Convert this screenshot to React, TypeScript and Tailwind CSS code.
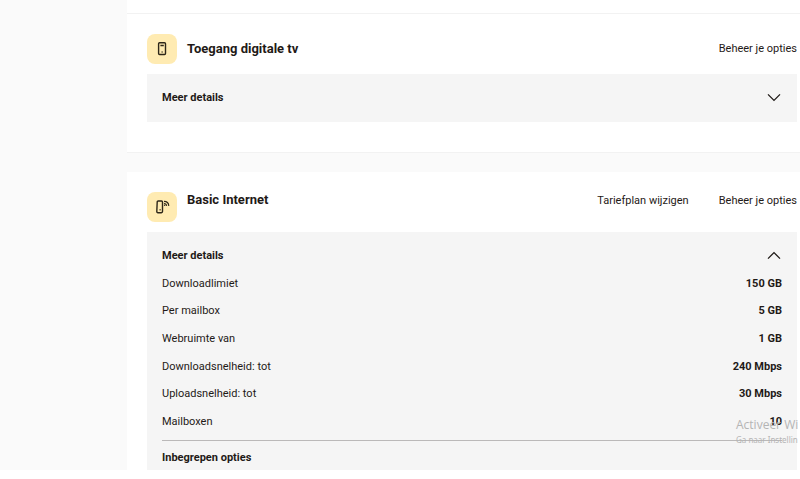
import { useState, type ReactNode } from "react";

interface Spec {
  label: string;
  value: string;
}

interface ProductCardProps {
  title: string;
  icon: ReactNode;
  links: string[];
  specs: Spec[];
  defaultOpen?: boolean;
  tall?: boolean;
}

const internetSpecs: Spec[] = [
  { label: "Downloadlimiet", value: "150 GB" },
  { label: "Per mailbox", value: "5 GB" },
  { label: "Webruimte van", value: "1 GB" },
  { label: "Downloadsnelheid: tot", value: "240 Mbps" },
  { label: "Uploadsnelheid: tot", value: "30 Mbps" },
  { label: "Mailboxen", value: "10" },
];

function DecoderIcon() {
  return (
    <svg viewBox="0 0 20 20" className="h-5 w-5" fill="none" stroke="#2d2618" strokeWidth="1.4" aria-hidden="true">
      <rect x="6.6" y="3.7" width="6.9" height="11.8" rx="1" />
      <path d="M8.4 6.5h3.4M9.6 13h1" />
    </svg>
  );
}

function ModemIcon() {
  return (
    <svg viewBox="0 0 20 20" className="h-5 w-5" fill="none" stroke="#2d2618" strokeWidth="1.4" aria-hidden="true">
      <path d="M6.2 4h3.3a1 1 0 0 1 1 1v9.6a1.1 1.1 0 0 1-1.1 1.1H5.9a1.1 1.1 0 0 1-1.1-1.2L5.2 5a1 1 0 0 1 1-1z" />
      <path d="M7.6 12.8h1" />
      <path strokeWidth="1.2" d="M12 4.4a4.9 4.9 0 0 1 4.8 4.5M12 6.5a2.6 2.6 0 0 1 2.6 2.4" />
      <circle cx="12.6" cy="8.3" r=".7" fill="#2d2618" stroke="none" />
    </svg>
  );
}

function Chevron({ open }: { open: boolean }) {
  return (
    <svg viewBox="0 0 16 16" className="h-4 w-4" fill="none" stroke="#1f1a17" strokeWidth="1.3" aria-hidden="true">
      <path d={open ? "M2 10.6l6-6 6 6" : "M2 4.4l6 6 6-6"} />
    </svg>
  );
}

function ProductCard({ title, icon, links, specs, defaultOpen = false, tall = false }: ProductCardProps) {
  const [open, setOpen] = useState(defaultOpen);

  return (
    <section className="border-b border-[#f2f2f2] bg-white pt-5 pr-[3px] pb-[30px] pl-5">
      <header className={`flex gap-[10px] pb-[10px] ${tall ? "items-start" : "items-center"}`}>
        <div className="flex h-[30px] w-[30px] shrink-0 items-center justify-center rounded-lg bg-[#ffebb2]">
          {icon}
        </div>
        <h2 className="text-[13px] leading-4 font-bold">{title}</h2>
        <nav className="ml-auto flex gap-[30px]">
          {links.map((link) => (
            <a key={link} href="#" className="leading-[18px] whitespace-nowrap">
              {link}
            </a>
          ))}
        </nav>
      </header>

      <div className="bg-[#f5f5f5] px-[15px]">
        <button
          type="button"
          aria-expanded={open}
          onClick={() => setOpen(!open)}
          className="flex h-12 w-full items-center justify-between font-bold"
        >
          Meer details
          <Chevron open={open} />
        </button>

        {open && specs.length > 0 && (
          <>
            <dl className="-mt-[11px] grid h-[172px] grid-rows-6 border-b border-[#bbb9b9] pt-px pb-1">
              {specs.map((spec) => (
                <div key={spec.label} className="flex items-center justify-between">
                  <dt>{spec.label}</dt>
                  <dd className="font-bold">{spec.value}</dd>
                </div>
              ))}
            </dl>
            <h3 className="py-2 leading-[18px] font-bold">Inbegrepen opties</h3>
          </>
        )}
      </div>
    </section>
  );
}

export default function App() {
  return (
    <div className="relative h-screen overflow-hidden bg-white pb-[9px] font-['Roboto',sans-serif] text-[11px] text-[#1f1a17]">
      <div className="flex h-full overflow-hidden bg-[#fafafa]">
        <div className="w-[127px] shrink-0" />
        <main className="min-w-0 flex-1">
          <div className="h-[14px] border-b border-[#f2f2f2] bg-white" />
          <ProductCard title="Toegang digitale tv" icon={<DecoderIcon />} links={["Beheer je opties"]} specs={[]} />
          <div className="h-[19px]" />
          <ProductCard
            title="Basic Internet"
            icon={<ModemIcon />}
            links={["Tariefplan wijzigen", "Beheer je opties"]}
            specs={internetSpecs}
            defaultOpen
            tall
          />
        </main>
      </div>

      <div className="pointer-events-none absolute top-[417px] left-[736px] font-['Open_Sans',sans-serif] whitespace-nowrap text-[#b4b4b4]">
        <p className="text-[12px] leading-4">Activeer Wi</p>
        <p className="font-['Noto_Sans',sans-serif] text-[8px] leading-[14px]">Ga naar Instellin</p>
      </div>
    </div>
  );
}
